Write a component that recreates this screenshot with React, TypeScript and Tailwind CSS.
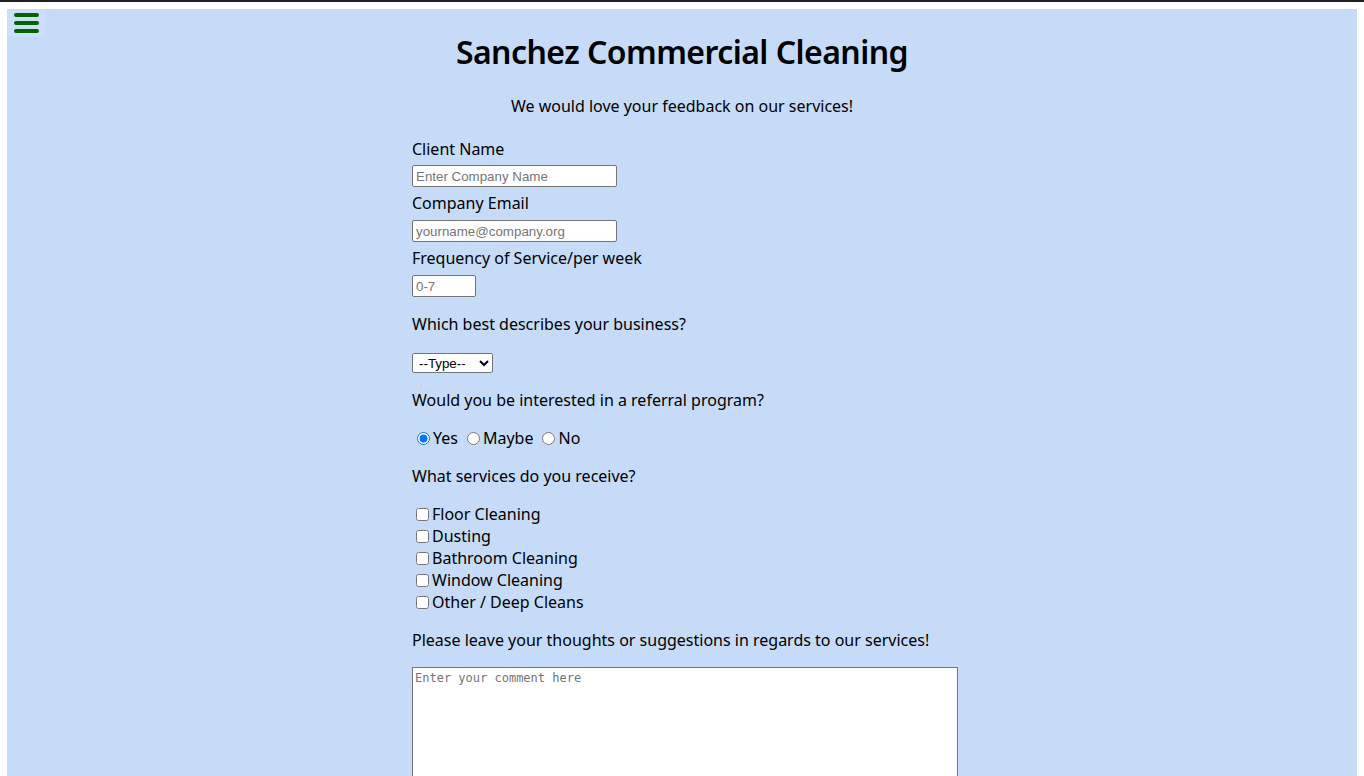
import React from 'react';

const SERVICES = ['Floor Cleaning', 'Dusting', 'Bathroom Cleaning', 'Window Cleaning', 'Other / Deep Cleans'];

const inputCls =
 "block h-[22px] border border-[#767676] rounded-[2px] bg-white px-[3px] font-['Liberation_Sans',Arial,sans-serif] text-[13.33px] text-black placeholder:text-[#757575] outline-none";

export default function App() {
 return (
  <div className="min-h-[776px] bg-white font-['Noto_Sans',sans-serif] text-[16px] text-black">
   <div className="h-[2px] bg-[#1f1f23]" />
   <div className="px-[7px] pt-[7px]">
    <div className="relative min-h-[767px] bg-[#c6dbf8] pb-10">
     {/* menu toggle */}
     <button className="absolute left-0 top-0 flex h-[28px] w-[38px] flex-col items-start gap-[4px] bg-[#cddff8] pl-[7px] pt-[4px]">
      <span className="block h-[4px] w-[25px] rounded-full bg-[#006400]" />
      <span className="block h-[4px] w-[25px] rounded-full bg-[#006400]" />
      <span className="block h-[4px] w-[25px] rounded-full bg-[#006400]" />
     </button>

     <h1 className="pt-[21px] text-center text-[32px] font-semibold leading-[44px] tracking-[-0.55px]">Sanchez Commercial Cleaning</h1>
     <p className="mt-[21px] text-center leading-[22px]">We would love your feedback on our services!</p>

     <form className="ml-[30%] mt-[21px] w-[40%]">
      <label className="block leading-[22px]">Client Name</label>
      <input type="text" placeholder="Enter Company Name" className={`${inputCls} my-[5px] w-[205px]`} />
      <label className="block leading-[22px]">Company Email</label>
      <input type="email" placeholder="yourname@company.org" className={`${inputCls} mb-[5px] mt-[6px] w-[205px]`} />
      <label className="block leading-[22px]">Frequency of Service/per week</label>
      <input type="text" placeholder="0-7" className={`${inputCls} mt-[6px] w-[64px]`} />

      <p className="mt-[16px] leading-[22px]">Which best describes your business?</p>
      <select className="mt-[18px] block h-[20px] w-[81px] rounded-[2px] border border-[#767676] bg-white pl-[2px] font-['Liberation_Sans',Arial,sans-serif] text-[13.33px] text-black">
       <option>--Type--</option>
       <option>Office</option>
       <option>Retail</option>
       <option>Medical</option>
       <option>Other</option>
      </select>

      <p className="mt-[16px] leading-[22px]">Would you be interested in a referral program?</p>
      <div className="mt-[16px] flex items-center leading-[22px]">
       <input type="radio" name="referral" defaultChecked className="ml-[5px] mr-[3px] h-[13px] w-[13px]" />
       <span>Yes</span>
       <input type="radio" name="referral" className="ml-[9px] mr-[3px] h-[13px] w-[13px]" />
       <span>Maybe</span>
       <input type="radio" name="referral" className="ml-[9px] mr-[3px] h-[13px] w-[13px]" />
       <span>No</span>
      </div>

      <p className="mt-[16px] leading-[22px]">What services do you receive?</p>
      <div className="mt-[16px] flex flex-col">
       {SERVICES.map((s) => (
        <label key={s} className="flex items-center leading-[22px]">
         <input type="checkbox" className="ml-[4px] mr-[3px] h-[13px] w-[13px]" />
         <span>{s}</span>
        </label>
       ))}
      </div>

      <p className="mt-[16px] leading-[22px]">Please leave your thoughts or suggestions in regards to our services!</p>
      <textarea
       placeholder="Enter your comment here"
       className="mt-[16px] block h-[160px] w-[546px] border border-[#767676] bg-white px-[2px] pt-[1px] font-['DejaVu_Sans_Mono',monospace] text-[12px] text-black placeholder:text-[#757575] outline-none"
      />
     </form>
    </div>
   </div>
  </div>
 );
}
